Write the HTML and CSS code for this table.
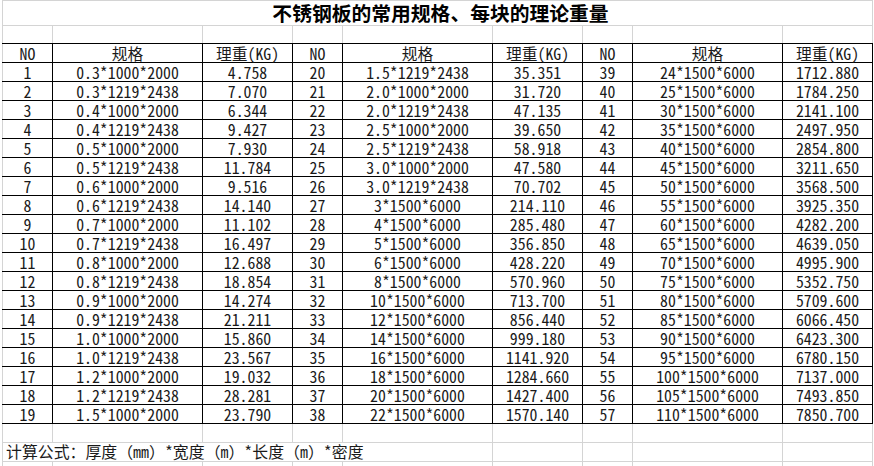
FILE: index.html
```html
<!DOCTYPE html>
<html lang="zh-CN">
<head>
<meta charset="utf-8">
<title>不锈钢板的常用规格、每块的理论重量</title>
<link rel="stylesheet" href="styles.css">
</head>
<body>
<table class="sheet">
  <colgroup>
    <col class="c-no"><col class="c-spec"><col class="c-wt">
    <col class="c-no"><col class="c-spec"><col class="c-wt">
    <col class="c-no"><col class="c-spec"><col class="c-wt">
  </colgroup>
  <tbody>
    <tr class="title-row"><td class="g title" colspan="9">不锈钢板的常用规格、每块的理论重量</td></tr>
    <tr class="gap-row gap-top"><td class="g"></td><td class="g"></td><td class="g"></td><td class="g"></td><td class="g"></td><td class="g"></td><td class="g"></td><td class="g"></td><td class="g"></td></tr>
    <tr class="row"><td class="t first">NO</td><td class="t">规格</td><td class="t">理重(KG)</td><td class="t">NO</td><td class="t">规格</td><td class="t">理重(KG)</td><td class="t">NO</td><td class="t">规格</td><td class="t">理重(KG)</td></tr>
    <tr class="row"><td class="t first">1</td><td class="t">0.3*1000*2000</td><td class="t">4.758</td><td class="t">20</td><td class="t">1.5*1219*2438</td><td class="t">35.351</td><td class="t">39</td><td class="t">24*1500*6000</td><td class="t">1712.880</td></tr>
    <tr class="row"><td class="t first">2</td><td class="t">0.3*1219*2438</td><td class="t">7.070</td><td class="t">21</td><td class="t">2.0*1000*2000</td><td class="t">31.720</td><td class="t">40</td><td class="t">25*1500*6000</td><td class="t">1784.250</td></tr>
    <tr class="row"><td class="t first">3</td><td class="t">0.4*1000*2000</td><td class="t">6.344</td><td class="t">22</td><td class="t">2.0*1219*2438</td><td class="t">47.135</td><td class="t">41</td><td class="t">30*1500*6000</td><td class="t">2141.100</td></tr>
    <tr class="row"><td class="t first">4</td><td class="t">0.4*1219*2438</td><td class="t">9.427</td><td class="t">23</td><td class="t">2.5*1000*2000</td><td class="t">39.650</td><td class="t">42</td><td class="t">35*1500*6000</td><td class="t">2497.950</td></tr>
    <tr class="row"><td class="t first">5</td><td class="t">0.5*1000*2000</td><td class="t">7.930</td><td class="t">24</td><td class="t">2.5*1219*2438</td><td class="t">58.918</td><td class="t">43</td><td class="t">40*1500*6000</td><td class="t">2854.800</td></tr>
    <tr class="row"><td class="t first">6</td><td class="t">0.5*1219*2438</td><td class="t">11.784</td><td class="t">25</td><td class="t">3.0*1000*2000</td><td class="t">47.580</td><td class="t">44</td><td class="t">45*1500*6000</td><td class="t">3211.650</td></tr>
    <tr class="row"><td class="t first">7</td><td class="t">0.6*1000*2000</td><td class="t">9.516</td><td class="t">26</td><td class="t">3.0*1219*2438</td><td class="t">70.702</td><td class="t">45</td><td class="t">50*1500*6000</td><td class="t">3568.500</td></tr>
    <tr class="row"><td class="t first">8</td><td class="t">0.6*1219*2438</td><td class="t">14.140</td><td class="t">27</td><td class="t">3*1500*6000</td><td class="t">214.110</td><td class="t">46</td><td class="t">55*1500*6000</td><td class="t">3925.350</td></tr>
    <tr class="row"><td class="t first">9</td><td class="t">0.7*1000*2000</td><td class="t">11.102</td><td class="t">28</td><td class="t">4*1500*6000</td><td class="t">285.480</td><td class="t">47</td><td class="t">60*1500*6000</td><td class="t">4282.200</td></tr>
    <tr class="row"><td class="t first">10</td><td class="t">0.7*1219*2438</td><td class="t">16.497</td><td class="t">29</td><td class="t">5*1500*6000</td><td class="t">356.850</td><td class="t">48</td><td class="t">65*1500*6000</td><td class="t">4639.050</td></tr>
    <tr class="row"><td class="t first">11</td><td class="t">0.8*1000*2000</td><td class="t">12.688</td><td class="t">30</td><td class="t">6*1500*6000</td><td class="t">428.220</td><td class="t">49</td><td class="t">70*1500*6000</td><td class="t">4995.900</td></tr>
    <tr class="row"><td class="t first">12</td><td class="t">0.8*1219*2438</td><td class="t">18.854</td><td class="t">31</td><td class="t">8*1500*6000</td><td class="t">570.960</td><td class="t">50</td><td class="t">75*1500*6000</td><td class="t">5352.750</td></tr>
    <tr class="row"><td class="t first">13</td><td class="t">0.9*1000*2000</td><td class="t">14.274</td><td class="t">32</td><td class="t">10*1500*6000</td><td class="t">713.700</td><td class="t">51</td><td class="t">80*1500*6000</td><td class="t">5709.600</td></tr>
    <tr class="row"><td class="t first">14</td><td class="t">0.9*1219*2438</td><td class="t">21.211</td><td class="t">33</td><td class="t">12*1500*6000</td><td class="t">856.440</td><td class="t">52</td><td class="t">85*1500*6000</td><td class="t">6066.450</td></tr>
    <tr class="row"><td class="t first">15</td><td class="t">1.0*1000*2000</td><td class="t">15.860</td><td class="t">34</td><td class="t">14*1500*6000</td><td class="t">999.180</td><td class="t">53</td><td class="t">90*1500*6000</td><td class="t">6423.300</td></tr>
    <tr class="row"><td class="t first">16</td><td class="t">1.0*1219*2438</td><td class="t">23.567</td><td class="t">35</td><td class="t">16*1500*6000</td><td class="t">1141.920</td><td class="t">54</td><td class="t">95*1500*6000</td><td class="t">6780.150</td></tr>
    <tr class="row"><td class="t first">17</td><td class="t">1.2*1000*2000</td><td class="t">19.032</td><td class="t">36</td><td class="t">18*1500*6000</td><td class="t">1284.660</td><td class="t">55</td><td class="t">100*1500*6000</td><td class="t">7137.000</td></tr>
    <tr class="row"><td class="t first">18</td><td class="t">1.2*1219*2438</td><td class="t">28.281</td><td class="t">37</td><td class="t">20*1500*6000</td><td class="t">1427.400</td><td class="t">56</td><td class="t">105*1500*6000</td><td class="t">7493.850</td></tr>
    <tr class="row"><td class="t first">19</td><td class="t">1.5*1000*2000</td><td class="t">23.790</td><td class="t">38</td><td class="t">22*1500*6000</td><td class="t">1570.140</td><td class="t">57</td><td class="t">110*1500*6000</td><td class="t">7850.700</td></tr>
    <tr class="gap-row"><td class="g"></td><td class="g"></td><td class="g"></td><td class="g"></td><td class="g"></td><td class="g"></td><td class="g"></td><td class="g"></td><td class="g"></td></tr>
    <tr class="gap-row"><td class="g formula" colspan="5">计算公式：厚度（mm）*宽度（m）*长度（m）*密度</td><td class="g"></td><td class="g"></td><td class="g"></td><td class="g"></td></tr>
    <tr class="gap-row"><td class="g"></td><td class="g"></td><td class="g"></td><td class="g"></td><td class="g"></td><td class="g"></td><td class="g"></td><td class="g"></td><td class="g"></td></tr>
  </tbody>
</table>
</body>
</html>
```

FILE: styles.css
```css
html, body {
  margin: 0;
  padding: 0;
  background: #ffffff;
  overflow: hidden;
}

.sheet {
  border-collapse: collapse;
  table-layout: fixed;
  margin-left: 2px;
  width: 871px;
  font-family: "Noto Sans Mono CJK SC", "Noto Sans CJK SC", "Liberation Mono", monospace;
  font-size: 15.8px;
  color: #1a1a1a;
}

.c-no { width: 50px; }
.c-spec { width: 150px; }
.c-wt { width: 90px; }

.sheet td {
  padding: 0;
  text-align: center;
  vertical-align: middle;
  white-space: nowrap;
  overflow: visible;
}

.g {
  border: 1px solid #d4d4d4;
}

.t {
  border: 1px solid #000;
}

.t.first {
  border-left-color: #d4d4d4;
}

.title-row td {
  height: 24px;
  font-family: "Noto Sans CJK SC", sans-serif;
  font-weight: 700;
  font-size: 19.8px;
  line-height: 24px;
  padding-left: 6px;
  color: #000;
}

.gap-row td {
  height: 18px;
  line-height: 18px;
}

.gap-top td {
  height: 17px;
  border-bottom-color: #000;
}

.row td {
  height: 17px;
  line-height: 17px;
  padding-top: 1px;
  box-sizing: content-box;
}

.formula {
  text-align: left !important;
  padding-left: 3px !important;
  font-size: 15.9px;
}
```
